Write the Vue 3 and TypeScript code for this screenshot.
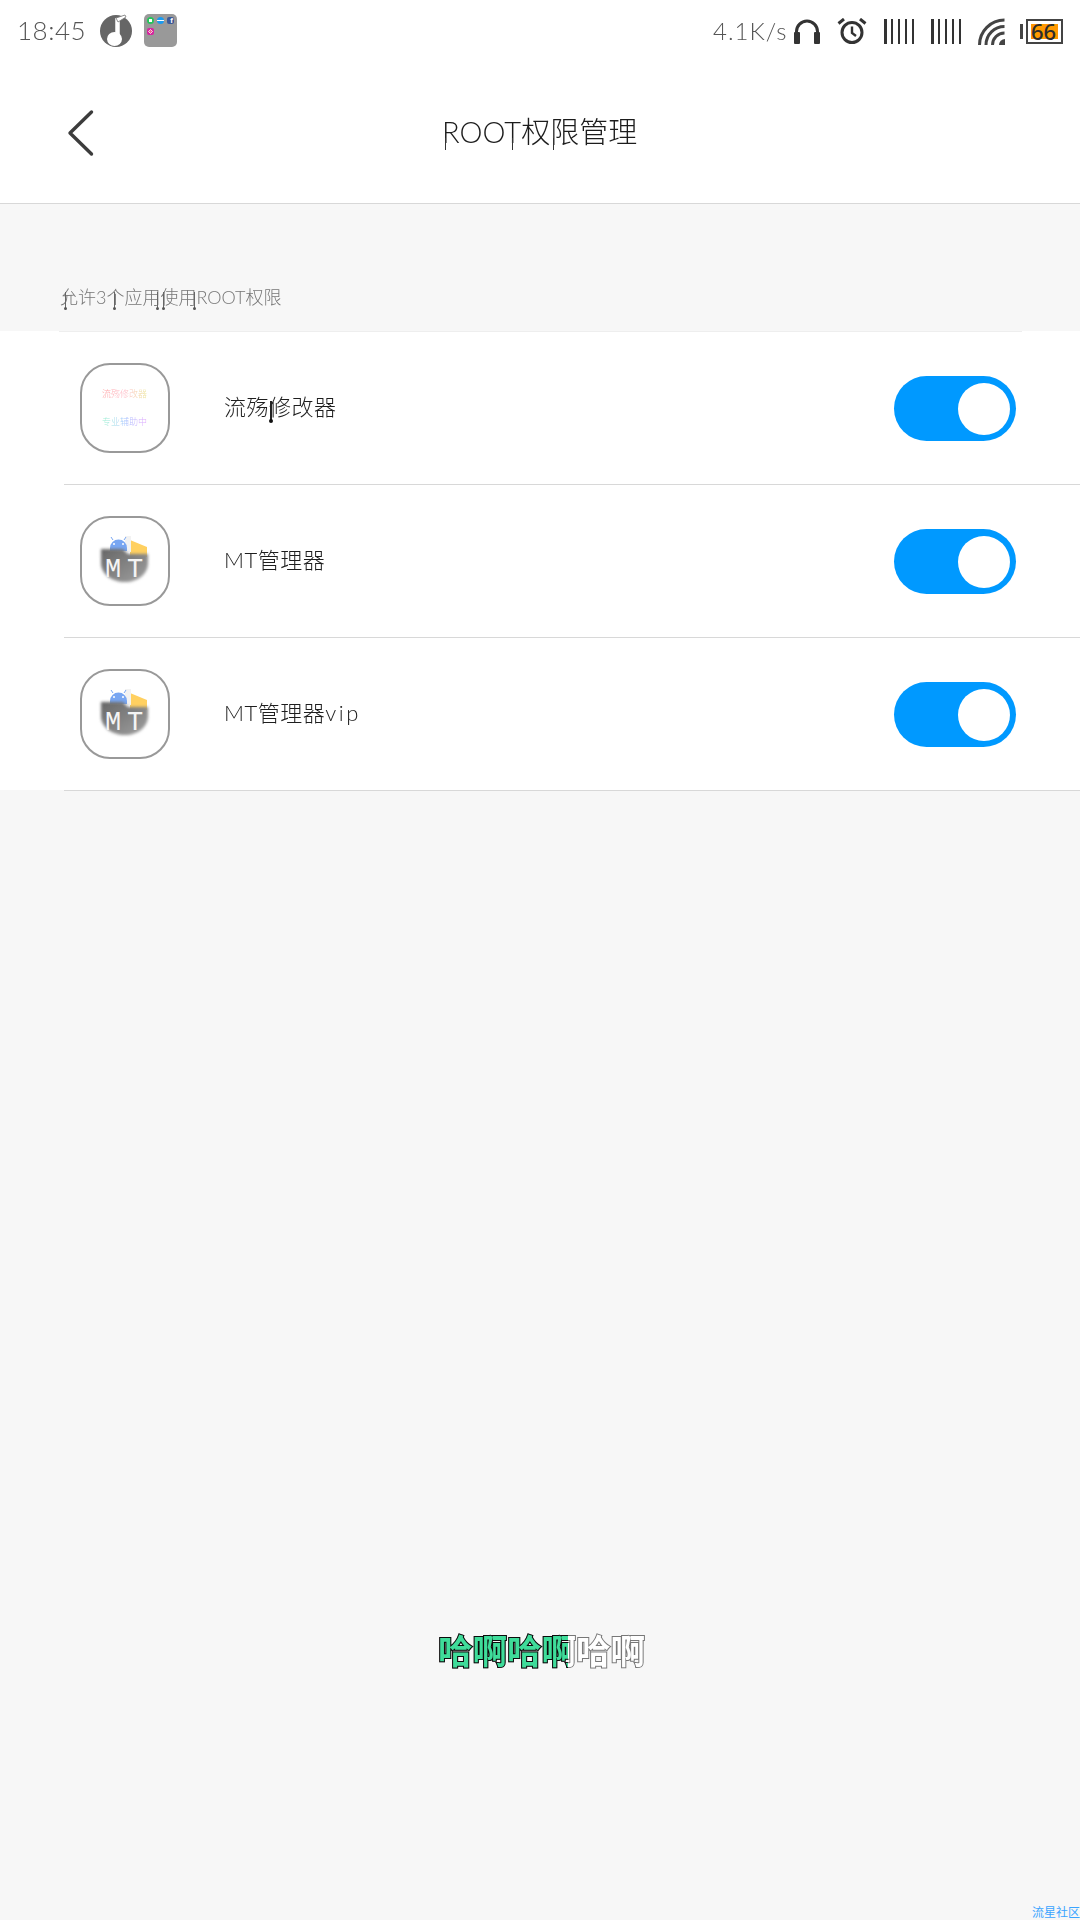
<script setup lang="ts">
interface AppItem {
  icon: 'liushang' | 'mt'
  before: string
  tail?: string
  after?: string
  suffix?: string
}

const apps: AppItem[] = [
  { icon: 'liushang', before: '流殇', tail: '修', after: '改器' },
  { icon: 'mt', before: 'MT管理器' },
  { icon: 'mt', before: 'MT管理器', suffix: 'vip' },
]

const bars = [0, 1, 2, 3, 4]
</script>

<template>
  <div class="page">
    <header class="status">
      <div class="status-left">
        <span class="clock">18:45</span>
        <svg class="music" width="32" height="34" viewBox="0 0 32 34">
          <circle cx="16" cy="18" r="16" fill="#666" />
          <ellipse cx="14.500" cy="26" rx="7.500" ry="7" fill="#fff" />
          <path d="M17.500 26V5" stroke="#fff" stroke-width="4.500" fill="none" />
          <path d="M16 5l9-3 1 2-8 5z" fill="#fff" stroke="#777" stroke-width="0.8" />
        </svg>
        <div class="folder">
          <i class="mini wa"></i>
          <i class="mini ms"></i>
          <i class="mini fb">f</i>
          <i class="mini ig"></i>
        </div>
      </div>
      <div class="status-right">
        <span class="speed">4.1K/s</span>
        <svg width="28" height="26" viewBox="0 0 28 26">
          <path d="M3.500 20V13.500a10.500 10.500 0 0 1 21 0V20" fill="none" stroke="#333" stroke-width="3" />
          <rect x="1" y="14" width="6" height="12" rx="1" fill="#333" />
          <rect x="21" y="14" width="6" height="12" rx="1" fill="#333" />
        </svg>
        <svg class="alarm" width="30" height="26" viewBox="0 0 30 26">
          <circle cx="15" cy="14.500" r="10" fill="none" stroke="#333" stroke-width="3" />
          <path d="M15 8.500v6.500l4 3" fill="none" stroke="#333" stroke-width="2.400" />
          <path d="M1.500 5.500L7 1M28.500 5.500L23 1" fill="none" stroke="#333" stroke-width="3" />
        </svg>
        <div class="signal">
          <i v-for="b in bars" :key="b"></i>
        </div>
        <div class="signal">
          <i v-for="b in bars" :key="b"></i>
        </div>
        <svg class="wifi" width="27" height="27" viewBox="0 0 27 27">
          <g fill="none" stroke="#444" stroke-width="3">
            <path d="M1.500 27A25 25 0 0 1 26.500 2" />
            <path d="M8 27A18.500 18.500 0 0 1 26.500 8.500" />
            <path d="M14.500 27A12 12 0 0 1 26.500 15" />
          </g>
          <path d="M27 27h-6a6 6 0 0 1 6-6z" fill="#444" />
        </svg>
        <div class="battery">
          <i class="nub"></i>
          <div class="cell">
            <div class="charge"></div>
            <span class="level">66</span>
          </div>
        </div>
      </div>
    </header>

    <nav class="nav">
      <svg class="back" width="28" height="48" viewBox="0 0 28 48">
        <path d="M24.500 3L3 24l21.500 21" fill="none" stroke="#3c3c3c" stroke-width="3.400" stroke-linecap="round" stroke-linejoin="round" />
      </svg>
      <h1 class="title"><span class="stem stem-r">R</span>OO<span class="stem stem-t">T</span>权<span class="stem stem-r">限</span>管理</h1>
      <span></span>
    </nav>

    <p class="caption">
      <span class="tail tail-a">允</span>许3<span class="tail tail-b">个</span>应<span class="tail tail-c">用</span><span class="tail tail-d">使</span><span class="tail tail-e">用</span>ROOT权限
    </p>

    <ul class="list">
      <li v-for="(app, i) in apps" :key="i" class="row">
        <div class="icon">
          <svg v-if="app.icon === 'liushang'" width="88" height="88" viewBox="0 0 88 88">
            <defs>
              <linearGradient id="rainbow-a" x1="0" x2="1" y1="0" y2="0">
                <stop offset="0" stop-color="#ff8a8a" />
                <stop offset="0.5" stop-color="#ffb0c0" />
                <stop offset="1" stop-color="#e8e080" />
              </linearGradient>
              <linearGradient id="rainbow-b" x1="0" x2="1" y1="0" y2="0">
                <stop offset="0" stop-color="#80f0c0" />
                <stop offset="0.5" stop-color="#90b8ff" />
                <stop offset="1" stop-color="#e090ff" />
              </linearGradient>
              <filter id="soft"><feGaussianBlur stdDeviation="0.6" /></filter>
            </defs>
            <g class="tiny" filter="url(#soft)">
              <text x="21" y="33" fill="url(#rainbow-a)">流殇修改器</text>
              <text x="21" y="61" fill="url(#rainbow-b)">专业辅助中</text>
            </g>
          </svg>
          <svg v-else width="88" height="88" viewBox="0 0 88 88">
            <defs>
              <linearGradient :id="`folder-${i}`" x1="0" x2="1" y1="0" y2="1">
                <stop offset="0" stop-color="#666" />
                <stop offset="1" stop-color="#a0a0a0" />
              </linearGradient>
              <filter :id="`blur-${i}`" x="-20%" y="-20%" width="140%" height="140%"><feGaussianBlur stdDeviation="1.500" /></filter>
            </defs>
            <path d="M49 23l17 7v10H49z" fill="#ffd060" />
            <rect x="44" y="19" width="6" height="16" fill="#f2f2f2" />
            <path d="M29 31a8.500 8.500 0 0 1 17 0v3H29z" fill="#78a6f2" />
            <path d="M32 23l-2-3M43 23l2-3" stroke="#78a6f2" stroke-width="1" />
            <circle cx="33" cy="27" r="1" fill="#fff" />
            <circle cx="42" cy="27" r="1" fill="#fff" />
            <path d="M20 32h22l5 5h20v9c0 11-10 19-23 19S20 57 20 46z" :fill="`url(#folder-${i})`" :filter="`url(#blur-${i})`" />
            <text class="mt-text" x="24" y="60">M</text>
            <text class="mt-text" x="46" y="60">T</text>
          </svg>
        </div>
        <span class="name">{{ app.before }}<span v-if="app.tail" class="tail tail-name">{{ app.tail }}</span>{{ app.after }}<span v-if="app.suffix" class="suffix">{{ app.suffix }}</span></span>
        <div class="switch">
          <div class="knob"></div>
        </div>
      </li>
    </ul>

    <div class="lyric">
      <span class="lyric-base">哈啊哈啊哈啊</span>
      <span class="lyric-done">哈啊哈啊哈啊</span>
    </div>

    <span class="watermark">流星社区</span>
  </div>
</template>

<style>
html,
body {
  margin: 0;
  background: #f7f7f7;
}
</style>

<style scoped>
.page {
  position: relative;
  height: 1920px;
  overflow: hidden;
  background: #f7f7f7;
  font-family: Lato, "Noto Sans CJK SC", sans-serif;
  font-weight: 300;
  color: #222;
}

.status {
  height: 62px;
  background: #fff;
  display: flex;
  justify-content: space-between;
  align-items: center;
  padding: 0 17px;
}

.status-left,
.status-right {
  display: flex;
  align-items: center;
}

.clock {
  font-size: 26px;
  letter-spacing: 0.5px;
  color: #555;
  width: 83px;
  margin-top: -2px;
  will-change: transform;
}

.music {
  margin-top: -2px;
}

.folder {
  position: relative;
  width: 33px;
  height: 33px;
  margin-left: 12px;
  margin-top: -2px;
  border-radius: 5px;
  background: #999;
}

.mini {
  position: absolute;
  width: 7px;
  height: 7px;
  border-radius: 2px;
}
.mini.wa { left: 3px; top: 3px; background: radial-gradient(#fff 30%, #25c45a 40%); border-radius: 50%; }
.mini.ms { left: 13px; top: 3px; background: linear-gradient(#1a9bf0 42%, #fff 42%, #fff 58%, #1a9bf0 58%); border-radius: 50%; }
.mini.fb {
  left: 23px;
  top: 3px;
  background: #3b5998;
  color: #fff;
  font-family: "Liberation Sans", sans-serif;
  font-size: 8px;
  font-style: normal;
  font-weight: 700;
  line-height: 8px;
  text-align: right;
  padding-right: 1px;
  box-sizing: border-box;
}
.mini.ig {
  left: 3px;
  top: 14px;
  background: radial-gradient(#f06090 25%, #fff 30%, #fff 38%, #d6249f 45%);
}

.speed {
  font-size: 24px;
  letter-spacing: 1px;
  color: #555;
  margin-right: 6px;
  margin-top: -2px;
  will-change: transform;
}

.alarm {
  margin-left: 16px;
}

.signal {
  display: flex;
  justify-content: space-between;
  width: 30px;
  height: 25px;
  margin-left: 17px;
}
.signal i {
  width: 2.500px;
  background: #333;
}

.wifi {
  margin-left: 17px;
}

.battery {
  display: flex;
  align-items: center;
  margin-left: 15px;
}

.nub {
  width: 3px;
  height: 15px;
  background: #444;
  margin-right: 3px;
}

.cell {
  position: relative;
  width: 33px;
  height: 21px;
  border: 2px solid #444;
}

.charge {
  position: absolute;
  left: 3px;
  top: 3px;
  bottom: 3px;
  right: 3px;
  background: #ff9900;
}

.level {
  position: absolute;
  left: 3px;
  top: -3px;
  font-family: "Noto Sans", sans-serif;
  font-size: 22px;
  line-height: 27px;
  font-weight: 500;
  color: #2c2c2c;
}

.nav {
  height: 141px;
  background: #fff;
  border-bottom: 1px solid #d8d8d8;
  display: grid;
  grid-template-columns: 1fr auto 1fr;
  align-items: center;
  padding: 0 67px;
}

.title {
  margin: -6px 0 0;
  font-size: 29px;
  font-weight: 300;
  color: #1c1c1c;
  will-change: transform;
}

.stem {
  position: relative;
}
.stem::after {
  content: "";
  position: absolute;
  width: 1px;
  height: 12px;
  top: 24px;
  background: #333;
}
.stem-r::after { left: 3px; }
.stem-t::after { left: 8px; }

.caption {
  height: 127px;
  box-sizing: border-box;
  margin: 0;
  padding: 80px 0 0 60px;
  font-size: 18px;
  line-height: 26px;
  color: #777;
  will-change: transform;
}

.tail {
  position: relative;
}
.tail::before {
  content: "";
  position: absolute;
  top: 6px;
  height: 16px;
  width: 1px;
  background: #666;
}
.tail::after {
  content: "";
  position: absolute;
  top: 21px;
  width: 3px;
  height: 3px;
  border-radius: 50%;
  background: #555;
}
.tail-a::before { left: 5px; }
.tail-a::after { left: 4px; }
.tail-b::before { left: 8px; }
.tail-b::after { left: 7px; }
.tail-c::before { left: 15px; }
.tail-c::after { left: 14px; }
.tail-d::before { left: 3px; }
.tail-d::after { left: 2px; }
.tail-e::before { left: 16px; }
.tail-e::after { left: 15px; }
.tail-name::before { left: 1px; top: 8px; height: 19px; width: 1.500px; background: #222; }
.tail-name::after { left: 0; top: 26px; width: 4px; height: 4px; background: #111; }

.list {
  list-style: none;
  margin: 0;
  padding: 0;
  background: #fff;
  position: relative;
}
.list::before {
  content: "";
  position: absolute;
  left: 59px;
  right: 58px;
  top: 0;
  height: 1px;
  background: #eee;
}

.row {
  position: relative;
  height: 153px;
  display: flex;
  align-items: center;
  padding: 2px 64px 0 80px;
  box-sizing: border-box;
}
.row::after {
  content: "";
  position: absolute;
  left: 64px;
  right: 0;
  bottom: -1px;
  height: 1px;
  background: #d8d8d8;
  z-index: 1;
}

.icon {
  width: 90px;
  height: 90px;
  margin-top: -2px;
  box-sizing: border-box;
  border: 2px solid #999;
  border-radius: 30px;
  overflow: hidden;
  flex-shrink: 0;
  display: flex;
  align-items: center;
  justify-content: center;
}
.icon svg {
  flex-shrink: 0;
}

.tiny {
  font-family: "Noto Sans CJK SC", sans-serif;
  font-size: 9px;
  opacity: 0.8;
}

.mt-text {
  font-family: "Liberation Mono", monospace;
  font-size: 27px;
  font-weight: 400;
  fill: #f4f4f4;
}

.name {
  margin-left: 54px;
  margin-top: -7px;
  font-size: 22px;
  letter-spacing: 0.5px;
  color: #1e1e1e;
  will-change: transform;
}

.suffix {
  letter-spacing: 2.500px;
}

.switch {
  margin-left: auto;
  width: 122px;
  height: 65px;
  border-radius: 33px;
  background: #0099ff;
  display: flex;
  align-items: center;
  justify-content: flex-end;
  padding-right: 6px;
  box-sizing: border-box;
}

.knob {
  width: 52px;
  height: 52px;
  border-radius: 50%;
  background: #fff;
}

.lyric {
  position: absolute;
  left: 438px;
  top: 1626px;
  font-family: "Noto Sans CJK SC", sans-serif;
  font-size: 34.500px;
  line-height: 46px;
  font-weight: 700;
  white-space: nowrap;
  will-change: transform;
}

.lyric-base {
  color: #fff;
  -webkit-text-stroke: 2px #777;
  paint-order: stroke fill;
}

.lyric-done {
  position: absolute;
  left: 0;
  top: 0;
  clip-path: inset(-4px 77px -4px -4px);
  color: #3fdc9a;
  -webkit-text-stroke: 2px #0b0b0b;
  paint-order: stroke fill;
}

.watermark {
  position: absolute;
  right: 0;
  bottom: 0;
  font-family: "Noto Sans CJK SC", sans-serif;
  font-size: 12px;
  line-height: 16px;
  font-weight: 400;
  color: #3ba4ff;
}
</style>
